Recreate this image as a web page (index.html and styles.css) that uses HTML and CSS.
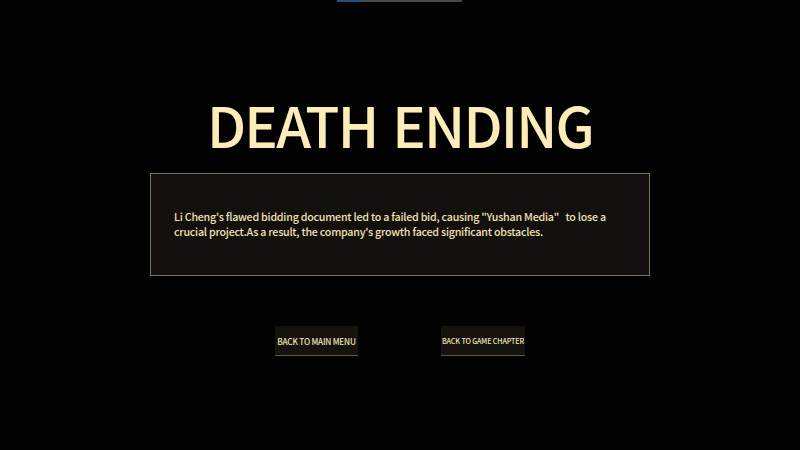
FILE: index.html
```html
<!DOCTYPE html>
<html lang="en">
<head>
    <meta charset="UTF-8">
    <meta name="viewport" content="width=device-width, initial-scale=1.0">
    <title>Death Ending</title>
    <link rel="stylesheet" href="styles.css">
</head>
<body>
    <div class="top-progress"><div class="top-progress-fill"></div></div>

    <div class="ending">
        <h1 class="ending-title">DEATH ENDING</h1>

        <div class="ending-panel">
            <p>Li Cheng's flawed bidding document led to a failed bid, causing "Yushan Media" &nbsp;&nbsp;to lose a crucial project.As a result, the company's growth faced significant obstacles.</p>
        </div>

        <div class="ending-actions">
            <button class="btn btn-main">BACK TO MAIN MENU</button>
            <button class="btn btn-chapter">BACK TO GAME CHAPTER</button>
        </div>
    </div>
</body>
</html>
```

FILE: styles.css
```css
html, body {
    margin: 0;
    padding: 0;
    background: #030202;
}
body {
    width: 800px;
    height: 450px;
    overflow: hidden;
    font-family: "Noto Sans CJK SC", "Noto Sans", sans-serif;
    color: #f3e6b6;
}
.top-progress {
    width: 125px;
    height: 2px;
    margin: 0 auto 0 337px;
    background: #4a4a4a;
}
.top-progress-fill {
    width: 27px;
    height: 100%;
    background: #2b4d78;
}
.ending {
    display: flex;
    flex-direction: column;
    align-items: center;
}
.ending-title {
    margin: 82px 0 0;
    font-size: 56px;
    font-weight: 500;
    line-height: 80px;
    letter-spacing: -1.8px;
    word-spacing: 4px;
    color: #fbecb8;
}
.ending-panel {
    box-sizing: border-box;
    width: 500px;
    height: 103px;
    margin-top: 9px;
    padding: 35px 22px 0 23px;
    background: #120f0c;
    border: 1px solid #77735e;
}
.ending-panel p {
    margin: 0;
    font-size: 10.7px;
    font-weight: 500;
    line-height: 15px;
    letter-spacing: -0.24px;
    color: #efe2b5;
}
.ending-actions {
    display: flex;
    gap: 83px;
    margin-top: 50px;
}
.btn {
    box-sizing: border-box;
    height: 30px;
    padding: 0;
    background: #16120e;
    border: none;
    border-bottom: 1px solid #5e594a;
    font-family: "Noto Sans CJK SC", "Noto Sans", sans-serif;
    font-weight: 500;
    white-space: nowrap;
    color: #efe4bc;
}
.btn-main {
    width: 83px;
    font-size: 8.2px;
    letter-spacing: -0.2px;
}
.btn-chapter {
    width: 84px;
    font-size: 7.2px;
    letter-spacing: -0.15px;
}
```
